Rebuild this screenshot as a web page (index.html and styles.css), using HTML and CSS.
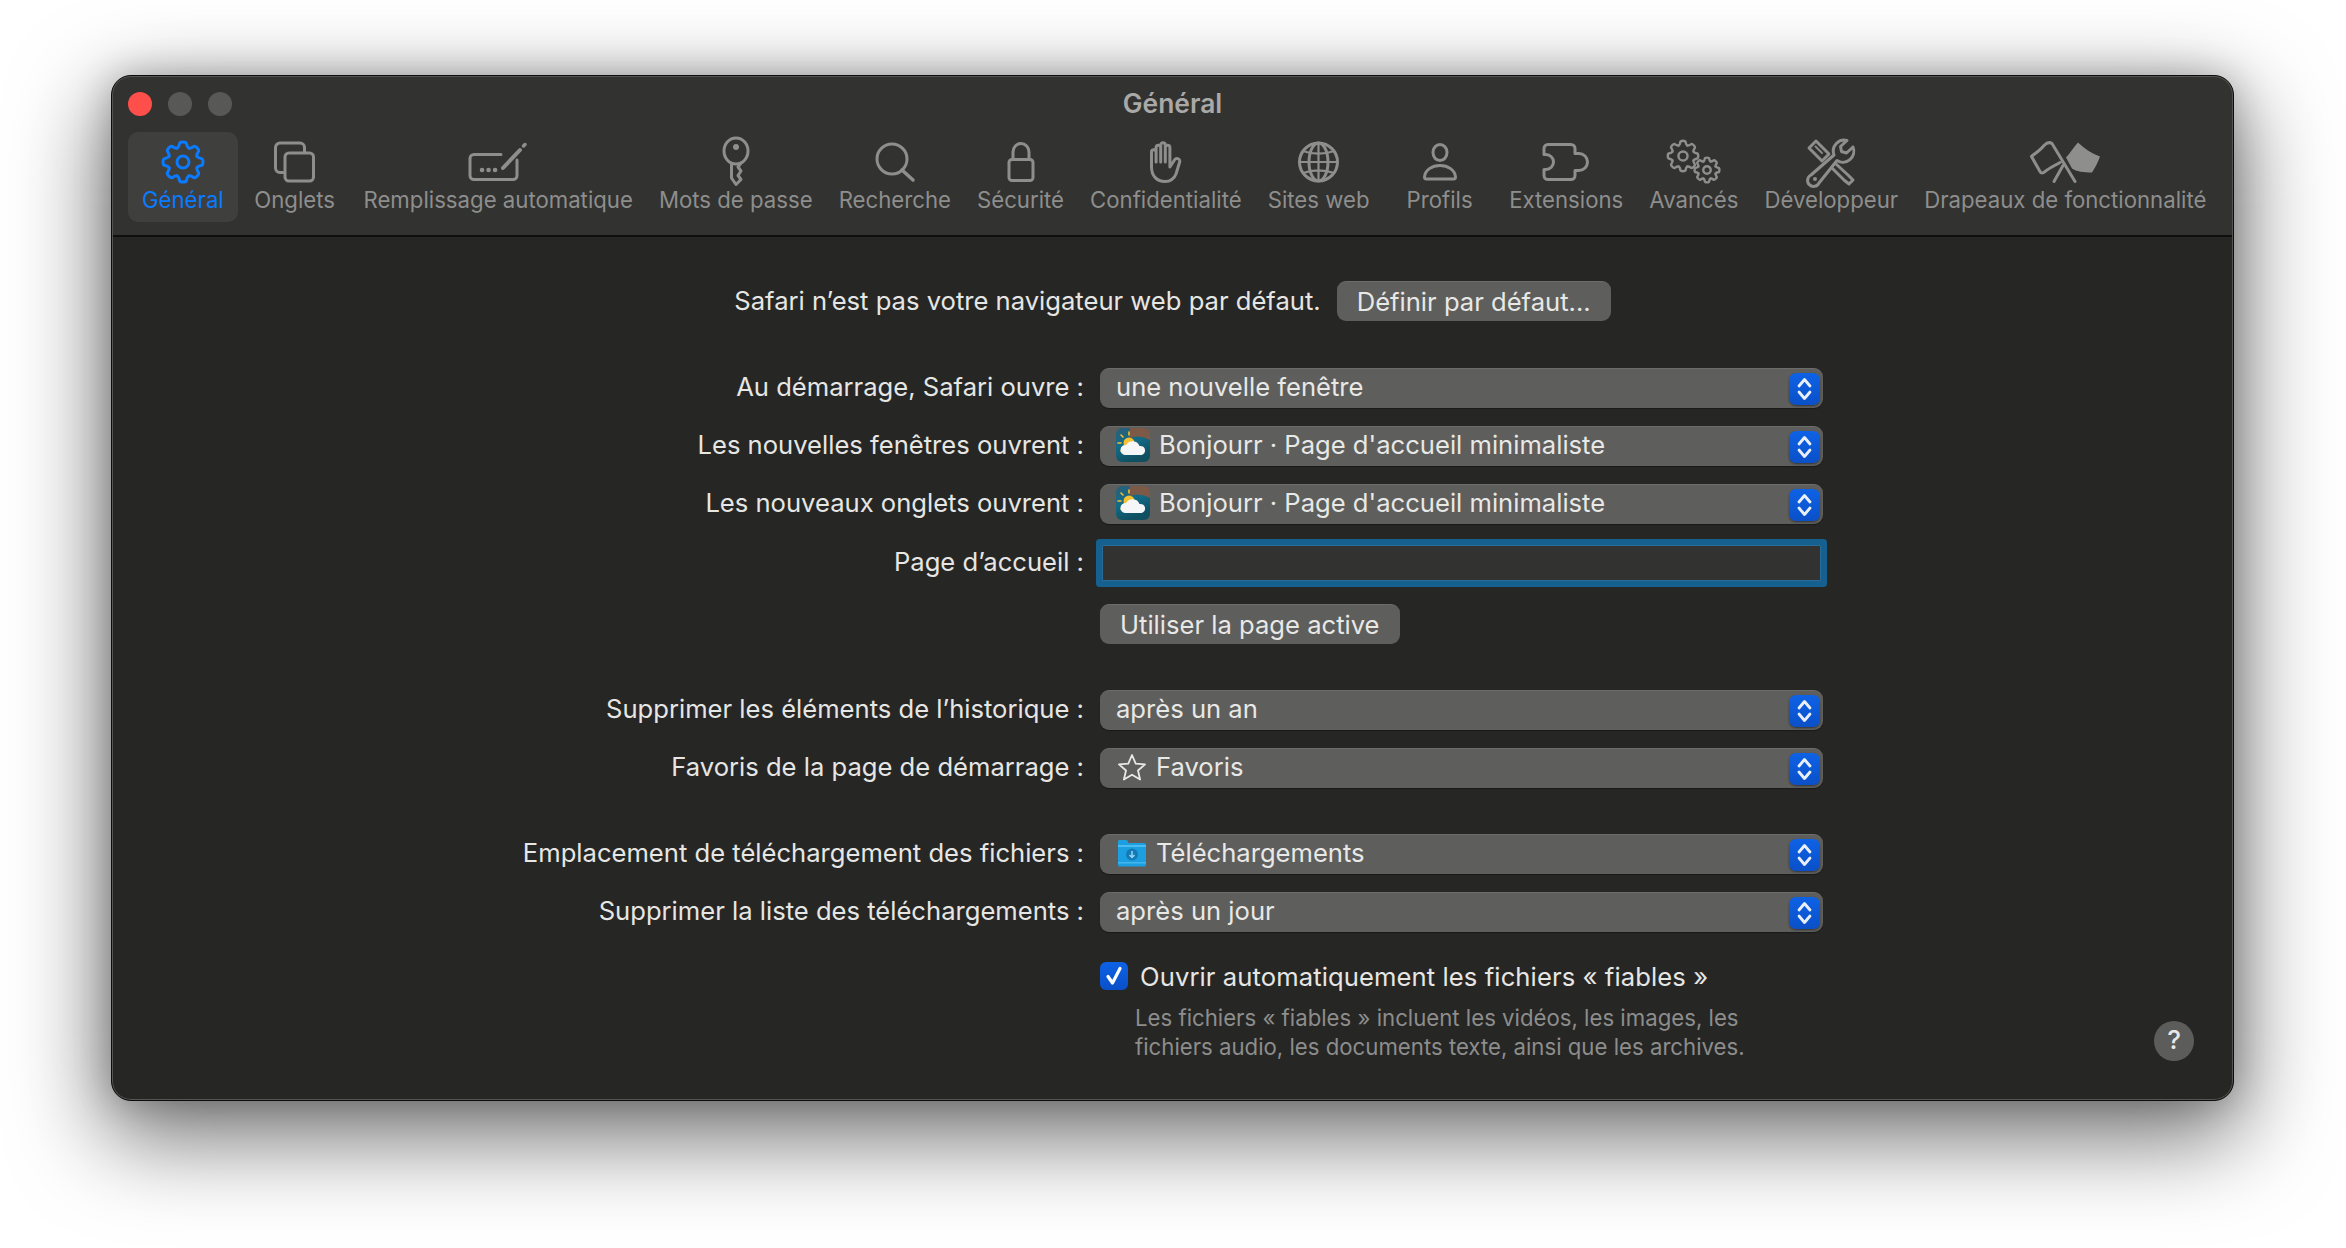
FILE: index.html
```html
<!DOCTYPE html>
<html lang="fr">
  <head>
    <meta charset="utf-8">
    <title>Général</title>
    <link rel="stylesheet" href="styles.css">
  </head>
  <body>
    <svg class="defs" width="0" height="0">
      <symbol id="cog" viewBox="-23 -23 46 46" overflow="visible">
        <g id="cog-teeth">
          <path id="tooth" d="M-5.7 -13.9Q-4 -15 -3.6 -18Q-3.4 -20 0 -20Q3.4 -20 3.6 -18Q4 -15 5.7 -13.9"/>
          <use href="#tooth" transform="rotate(45)"/>
          <use href="#tooth" transform="rotate(90)"/>
          <use href="#tooth" transform="rotate(135)"/>
          <use href="#tooth" transform="rotate(180)"/>
          <use href="#tooth" transform="rotate(225)"/>
          <use href="#tooth" transform="rotate(270)"/>
          <use href="#tooth" transform="rotate(315)"/>
        </g>
        <circle r="6"/>
      </symbol>
      <symbol id="updown" viewBox="0 0 31 32">
        <path d="M10 13L15.500 6.500L21 13M10 19L15.500 25.500L21 19" fill="none" stroke="#e9eefb" stroke-width="2.800" stroke-linecap="round" stroke-linejoin="round"/>
      </symbol>
      <symbol id="bonjourr" viewBox="0 0 34 34">
        <defs>
          <linearGradient id="sky" x1="0" y1="0" x2="0.4" y2="1">
            <stop offset="0" stop-color="#2c5f78"/>
            <stop offset="0.5" stop-color="#136b86"/>
            <stop offset="1" stop-color="#0f4f60"/>
          </linearGradient>
        </defs>
        <rect width="34" height="34" rx="6" fill="url(#sky)"/>
        <path d="M14 0H28Q34 0 34 6V12Q24 6 14 10Z" fill="#7d5a48"/>
        <circle cx="13" cy="15" r="5.500" fill="#f6c033"/>
        <path d="M13 4V7M5 7L7 9M2 15H5M5 23L7 21" stroke="#f6c033" stroke-width="1.600" stroke-linecap="round"/>
        <path d="M9 27a5 5 0 0 1 1-10a7.500 7.500 0 0 1 13.500 1a4.500 4.500 0 0 1 2 9Z" fill="#f4f6f8"/>
      </symbol>
    </svg>

    <div class="window">
      <header class="toolbar">
        <div class="titlebar">
          <div class="lights">
            <span class="light light-close"></span>
            <span class="light"></span>
            <span class="light"></span>
          </div>
          <div class="title">Général</div>
        </div>
        <nav class="tabs">
          <div class="tab active">
            <svg class="icon" width="46" height="46" viewBox="-23 -23 46 46"><use href="#cog-teeth"/><circle r="6"/></svg>
            <span>Général</span>
          </div>
          <div class="tab tab-onglets">
            <svg class="icon" width="41" height="41" viewBox="0 0 41 41">
              <rect x="11" y="11.500" width="28.500" height="28" rx="4"/>
              <path d="M9 31H6A4.500 4.500 0 0 1 1.500 26.500V6A4.500 4.500 0 0 1 6 1.500H26A4.500 4.500 0 0 1 30.500 6V10"/>
            </svg>
            <span>Onglets</span>
          </div>
          <div class="tab">
            <svg class="icon" width="60" height="38" viewBox="0 0 60 38">
              <path d="M33 11.500H6A4 4 0 0 0 2 15.500V32.500A4 4 0 0 0 6 36.500H45A4 4 0 0 0 49 32.500V17"/>
              <path d="M35 25L52 7" stroke-width="4"/>
              <path d="M55.500 3L57 1.500" stroke-width="3.500"/>
              <path d="M14 27h.1M20.500 27h.1M27 27h.1" stroke-width="4.500"/>
            </svg>
            <span>Remplissage automatique</span>
          </div>
          <div class="tab">
            <svg class="icon" width="28" height="50" viewBox="0 0 28 50">
              <ellipse cx="14" cy="14" rx="12" ry="13"/>
              <path d="M9.500 26.500V41L14 47.500L19 42.500L16 38.500L19 34L16 30L19 26"/>
              <circle class="solid" cx="14" cy="10" r="3"/>
            </svg>
            <span>Mots de passe</span>
          </div>
          <div class="tab">
            <svg class="icon" width="40" height="40" viewBox="0 0 40 40">
              <circle cx="17" cy="17" r="15"/>
              <path d="M27 28L38 38" stroke-width="3.500"/>
            </svg>
            <span>Recherche</span>
          </div>
          <div class="tab">
            <svg class="icon" width="28" height="40" viewBox="0 0 28 40">
              <rect x="2" y="17.500" width="24" height="21" rx="3"/>
              <path d="M6 17.500V10A8 8.500 0 0 1 22 10V17.500"/>
            </svg>
            <span>Sécurité</span>
          </div>
          <div class="tab">
            <svg class="icon" width="34" height="42" viewBox="0 0 34 42">
              <path d="M2.500 26V11A2.300 2.300 0 0 1 7.100 11V21V6.500A2.300 2.300 0 0 1 11.700 6.500V21V4A2.300 2.300 0 0 1 16.300 4V21V6.500A2.300 2.300 0 0 1 20.900 6.500V26L25.500 19A2.500 2.500 0 0 1 30.500 21.500L27 33C25 38 21.500 40.500 16 40.500C8 40.500 2.500 35 2.500 26Z"/>
            </svg>
            <span>Confidentialité</span>
          </div>
          <div class="tab">
            <svg class="icon" width="41" height="41" viewBox="0 0 41 41">
              <circle cx="20.500" cy="20.500" r="19"/>
              <ellipse cx="20.500" cy="20.500" rx="9.500" ry="19"/>
              <path d="M20.500 1.500V39.500M1.500 20.500H39.500M5 9.500C14 13 27 13 36 9.500M5 31.500C14 28 27 28 36 31.500" stroke-width="2.200"/>
            </svg>
            <span>Sites web</span>
          </div>
          <div class="tab tab-profils">
            <svg class="icon" width="36" height="38" viewBox="0 0 36 38">
              <ellipse cx="18" cy="9.500" rx="7" ry="8"/>
              <path d="M2.500 34C3 27 10 22.500 18 22.500S33 27 33.500 34A2 2 0 0 1 31.500 36H4.500A2 2 0 0 1 2.500 34Z"/>
            </svg>
            <span>Profils</span>
          </div>
          <div class="tab">
            <svg class="icon" width="48" height="38" viewBox="0 0 48 38">
              <path d="M6 1.500H29A4 4 0 0 1 33 5.500V10.500H37A8.500 8.500 0 0 1 37 27.500H33V32.500A4 4 0 0 1 29 36.500H6A4 4 0 0 1 2 32.500V26.500H4A7.500 7.500 0 0 0 4 11.500H2V5.500A4 4 0 0 1 6 1.500Z"/>
            </svg>
            <span>Extensions</span>
          </div>
          <div class="tab">
            <svg class="icon" width="54" height="44" viewBox="0 0 54 44">
              <g transform="translate(16 16) scale(.76)" stroke-width="3.200"><use href="#cog-teeth"/><circle r="6"/></g>
              <g transform="translate(40 30) scale(.62)" stroke-width="3.900"><use href="#cog-teeth"/><circle r="6"/></g>
            </svg>
            <span>Avancés</span>
          </div>
          <div class="tab">
            <svg class="icon" width="48" height="46" viewBox="0 0 48 46">
              <path d="M9 2L2 9L15 22L22 15Z"/>
              <path d="M8.500 7.500L15 14M12 5L18.500 11.500" stroke-width="1.800"/>
              <path d="M29 25L41 36L46 41L42 45L37 41L25 29"/>
              <path d="M40 1.500A11 11 0 0 0 27 16L4 36A6 6 0 1 0 12 44L30 21.500A11 11 0 0 0 46 8L39.500 14L34.500 12.500L33.500 7.500Z"/>
              <circle class="solid" cx="8" cy="40" r="2"/>
            </svg>
            <span>Développeur</span>
          </div>
          <div class="tab">
            <svg class="icon" width="71" height="41" viewBox="0 0 71 41">
              <path d="M45 40L22 2C19 0 16 2 14 4C10 9 5 12 1.500 15L10 30C11 32 13 32 15 30C20 26 25 24 30 21"/>
              <path d="M24 40L33 24" />
              <path class="solid" d="M36 16C40 12 44 5 48 1C54 7 62 12 70 15C68 21 65 26 62 31C54 31 46 30 42 27Z"/>
            </svg>
            <span>Drapeaux de fonctionnalité</span>
          </div>
        </nav>
      </header>

      <main class="prefs">
        <div class="default-row">
          <span class="default-text">Safari n’est pas votre navigateur web par défaut.</span>
          <button class="btn">Définir par défaut...</button>
        </div>

        <div class="form">
          <div class="row">
            <label>Au démarrage, Safari ouvre :</label>
            <div class="select"><span class="value">une nouvelle fenêtre</span><svg class="stepper"><use href="#updown"/></svg></div>
          </div>
          <div class="row">
            <label>Les nouvelles fenêtres ouvrent :</label>
            <div class="select"><span class="value"><svg class="favicon"><use href="#bonjourr"/></svg>Bonjourr · Page d'accueil minimaliste</span><svg class="stepper"><use href="#updown"/></svg></div>
          </div>
          <div class="row">
            <label>Les nouveaux onglets ouvrent :</label>
            <div class="select"><span class="value"><svg class="favicon"><use href="#bonjourr"/></svg>Bonjourr · Page d'accueil minimaliste</span><svg class="stepper"><use href="#updown"/></svg></div>
          </div>
          <div class="row row-field">
            <label>Page d’accueil :</label>
            <div class="field"></div>
          </div>
          <div class="row row-btn">
            <span></span>
            <div><button class="btn">Utiliser la page active</button></div>
          </div>

          <div class="row group">
            <label>Supprimer les éléments de l’historique :</label>
            <div class="select"><span class="value">après un an</span><svg class="stepper"><use href="#updown"/></svg></div>
          </div>
          <div class="row">
            <label>Favoris de la page de démarrage :</label>
            <div class="select">
              <span class="value value-tight">
                <svg class="small-icon" width="30" height="28" viewBox="0 0 30 28"><path d="M15 2L18.700 10.600L28 11.400L21 17.500L23.100 26.500L15 21.700L6.900 26.500L9 17.500L2 11.400L11.300 10.600Z" fill="none" stroke="#e8e8e6" stroke-width="1.800" stroke-linejoin="round"/></svg>
                Favoris
              </span>
              <svg class="stepper"><use href="#updown"/></svg>
            </div>
          </div>

          <div class="row group-small">
            <label>Emplacement de téléchargement des fichiers :</label>
            <div class="select">
              <span class="value value-tight">
                <svg class="small-icon" width="30" height="28" viewBox="0 0 30 28">
                  <path d="M1 2.500Q1 1 2.500 1H9Q10.500 1 11 2.500L11.500 4H27Q29 4 29 6V26Q29 27.500 27.500 27.500H2.500Q1 27.500 1 26Z" fill="#1c9fe0"/>
                  <path d="M1 6H29V8H1Z" fill="#4cbcf0"/>
                  <path d="M1 23H29V24.500H1Z" fill="#45b6ec"/>
                  <circle cx="15" cy="15.500" r="6" fill="#1579b5"/>
                  <path d="M15 12V18.500M12.500 16L15 18.500L17.500 16" fill="none" stroke="#8fd6f7" stroke-width="1.500"/>
                </svg>
                Téléchargements
              </span>
              <svg class="stepper"><use href="#updown"/></svg>
            </div>
          </div>
          <div class="row">
            <label>Supprimer la liste des téléchargements :</label>
            <div class="select"><span class="value">après un jour</span><svg class="stepper"><use href="#updown"/></svg></div>
          </div>

          <div class="row row-check">
            <span></span>
            <div>
              <div class="check-line">
                <span class="checkbox">
                  <svg width="28" height="28" viewBox="0 0 28 28"><path d="M8 14.500L12.500 21L20 6.500" fill="none" stroke="#fff" stroke-width="3.200" stroke-linecap="round" stroke-linejoin="round"/></svg>
                </span>
                <span>Ouvrir automatiquement les fichiers « fiables »</span>
              </div>
              <p class="note">Les fichiers « fiables » incluent les vidéos, les images, les<br>fichiers audio, les documents texte, ainsi que les archives.</p>
            </div>
          </div>
        </div>
      </main>

      <div class="help">?</div>
    </div>
  </body>
</html>
```

FILE: styles.css
```css
* { box-sizing: border-box; }

html, body { margin: 0; height: 100%; }

body {
  background: #fff;
  padding: 75px 0 0 111px;
  overflow: hidden;
  font-family: Inter, "Noto Sans", "Liberation Sans", sans-serif;
  color: #e6e6e4;
}

.defs { position: absolute; }

.window {
  position: relative;
  width: 2123px;
  height: 1026px;
  border: 1px solid #0c0c0c;
  border-radius: 20px;
  background: #262625;
  overflow: hidden;
  box-shadow: 0 30px 90px 8px rgba(0, 0, 0, 0.55), 0 0 36px rgba(0, 0, 0, 0.22);
}

/* lighter inner edge, goes on top of the bars */
.window::after {
  content: "";
  position: absolute;
  inset: 0;
  border: 1.500px solid #555553;
  border-radius: 19px;
  pointer-events: none;
}

.toolbar {
  height: 161px;
  background: #323230;
  border-bottom: 2px solid #0f0f0f;
  padding: 0 16px;
}

.titlebar {
  position: relative;
  height: 56px;
  display: flex;
  align-items: center;
  justify-content: center;
}

.lights {
  position: absolute;
  left: 0;
  top: 16px;
  display: flex;
  gap: 16px;
}

.light {
  width: 24px;
  height: 24px;
  border-radius: 50%;
  background: #585857;
}

.light-close { background: #ff4f4b; }

.title {
  font-size: 26.400px;
  font-weight: 600;
  color: #a9a9a8;
  margin-top: -3px;
}

.tabs {
  display: flex;
  height: 90px;
}

.tab {
  flex: none;
  height: 90px;
  padding: 0 13px;
  border-radius: 10px;
  display: flex;
  flex-direction: column;
  align-items: center;
  color: #8e8e8d;
  font-size: 22.200px;
  white-space: nowrap;
}

.tab .icon {
  flex: none;
  height: 50px;
  margin-top: 5px;
  overflow: visible;
  fill: none;
  stroke: currentColor;
  stroke-width: 3;
  stroke-linecap: round;
  stroke-linejoin: round;
}

.tab .icon .solid { fill: currentColor; stroke: none; }

.tab span { line-height: 26px; }

.tab.active {
  padding: 0 14px;
  background: #3f3f3e;
  color: #0a7bff;
}

.tab-onglets { margin: 0 2.500px 0 3.500px; }

.tab-profils { margin: 0 10.500px 0 11px; }

.prefs {
  padding-top: 44px;
  font-size: 25.600px;
}

.default-row {
  display: flex;
  align-items: center;
  justify-content: center;
  gap: 16px;
  height: 40px;
}

.default-text { padding-bottom: 2px; }

.btn {
  height: 40px;
  padding: 0 20px;
  border: none;
  border-radius: 9px;
  background: #5e5e5c;
  border-top: 1px solid #6c6c6a;
  color: #e8e8e6;
  font: inherit;
}

.form {
  display: flex;
  flex-direction: column;
  gap: 18px;
  margin-top: 47px;
}

.row {
  display: grid;
  grid-template-columns: 972px 723px;
  column-gap: 16px;
  align-items: center;
  min-height: 40px;
}

.row label {
  text-align: right;
  padding-bottom: 4px;
}

.select {
  height: 40px;
  display: flex;
  align-items: center;
  justify-content: space-between;
  padding: 0 3px 0 16px;
  border-radius: 9px;
  background: #5e5e5c;
  border-top: 1px solid #6c6c6a;
  box-shadow: 0 1px 1px rgba(0, 0, 0, 0.3);
}

.value {
  display: flex;
  align-items: center;
  gap: 9px;
  line-height: 34px;
  padding-bottom: 3px;
  color: #e8e8e6;
}

.value-tight { gap: 9px; padding-left: 1px; }

.favicon { width: 34px; height: 34px; flex: none; }

.small-icon { flex: none; }

.stepper {
  width: 31px;
  height: 32px;
  flex: none;
  border-radius: 7px;
  background: linear-gradient(#0e62e6, #0a50c8);
  box-shadow: 0 1px 2px rgba(0, 0, 0, 0.45);
}

.field {
  height: 36px;
  margin: 0 2px;
  background: #323230;
  border: 1px solid #2a6c98;
  box-shadow: 0 0 0 6px #15608f;
  border-radius: 1px;
}

.row-field { margin-top: 1px; }

.row-btn { margin-top: 3px; }

.group { margin-top: 28px; }

.group-small { margin-top: 28px; }

.row-check { margin-top: 12px; align-items: start; }

.check-line {
  display: flex;
  align-items: center;
  gap: 12px;
  height: 28px;
  letter-spacing: 0.1px;
}

.checkbox {
  width: 28px;
  height: 28px;
  flex: none;
  border-radius: 6px;
  background: linear-gradient(#0e62e6, #0a50c8);
}

.note {
  margin: 14px 0 0 35px;
  font-size: 22.200px;
  line-height: 28.500px;
  color: #8d8d8c;
  white-space: nowrap;
}

.help {
  position: absolute;
  right: 39px;
  bottom: 39px;
  width: 40px;
  height: 40px;
  border-radius: 50%;
  background: #5c5c5a;
  color: #e8e8e6;
  font-size: 26px;
  font-weight: 500;
  line-height: 38px;
  text-align: center;
}
```
